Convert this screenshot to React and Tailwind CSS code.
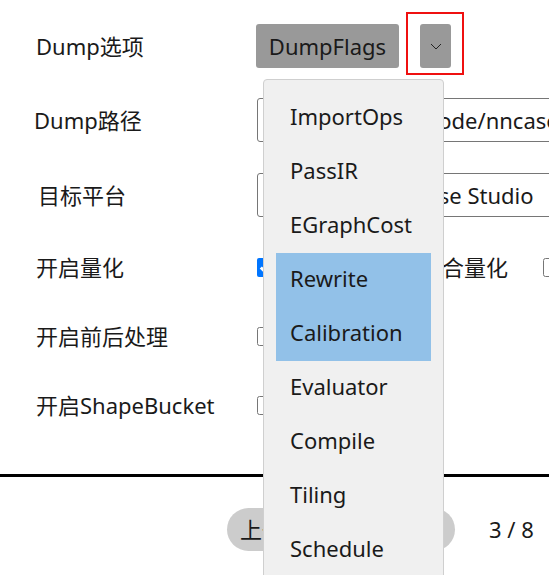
import { useState } from "react";

const dumpFlags = [
  "ImportOps",
  "PassIR",
  "EGraphCost",
  "Rewrite",
  "Calibration",
  "Evaluator",
  "Compile",
  "Tiling",
  "Schedule",
  "CodeGen",
];

const App = () => {
  const [selected] = useState(["Rewrite", "Calibration"]);

  return (
    <div
      className="relative h-[575px] w-[549px] overflow-hidden bg-white text-[22px] text-[#1a1a1a]"
      style={{ fontFamily: '"Noto Sans", "Noto Sans CJK SC", sans-serif' }}
    >
      <div className="flex flex-col">
        {/* Dump选项 */}
        <div className="mt-[24px] flex h-[44px] items-center whitespace-nowrap">
          <div className="w-[256px] shrink-0 pl-[36px]">Dump选项</div>
          <button className="h-[44px] w-[143px] shrink-0 rounded-[3px] bg-[#999999] text-[22px]">
            DumpFlags
          </button>
          <div className="relative ml-[21px] shrink-0">
            <button className="flex h-[44px] w-[31px] items-center justify-center rounded-[3px] bg-[#999999]">
              <svg width="12" height="7" viewBox="0 0 12 7" fill="none">
                <path d="M1 1l5 5 5-5" stroke="#222" strokeWidth="1" />
              </svg>
            </button>
            <div className="absolute left-[-14px] top-[-12px] h-[63px] w-[58px] border-2 border-[#ef1010]" />
          </div>
        </div>

        {/* Dump路径 */}
        <div className="mt-[30px] flex h-[44px] items-center whitespace-nowrap">
          <div className="w-[257px] shrink-0 pl-[34px]">Dump路径</div>
          <input
            className="h-[44px] w-[340px] shrink-0 rounded-[3px] border border-[#767676] px-[6px] text-[22px] outline-none"
            defaultValue="D:/workspace/vCode/nncase/tmp"
            readOnly
          />
        </div>

        {/* 目标平台 */}
        <div className="mt-[31px] flex h-[44px] items-center whitespace-nowrap">
          <div className="w-[257px] shrink-0 pl-[38px]">目标平台</div>
          <input
            className="h-[44px] w-[340px] shrink-0 rounded-[3px] border border-[#767676] px-[6px] text-[22px] outline-none"
            defaultValue="k230 within nncase Studio"
            readOnly
          />
        </div>

        {/* 开启量化 */}
        <div className="mt-[28px] flex h-[44px] items-center whitespace-nowrap">
          <div className="w-[257px] shrink-0 pl-[36px]">开启量化</div>
          <input type="checkbox" defaultChecked className="m-0 h-[19px] w-[19px] shrink-0" />
          <div className="ml-[144px] shrink-0">混合量化</div>
          <input type="checkbox" className="m-0 ml-[35px] h-[19px] w-[19px] shrink-0" />
        </div>

        {/* 开启前后处理 */}
        <div className="mt-[25px] flex h-[44px] items-center whitespace-nowrap">
          <div className="w-[257px] shrink-0 pl-[36px]">开启前后处理</div>
          <input type="checkbox" className="m-0 h-[19px] w-[19px] shrink-0" />
        </div>

        {/* 开启ShapeBucket */}
        <div className="mt-[25px] flex h-[44px] items-center whitespace-nowrap">
          <div className="w-[257px] shrink-0 pl-[36px]">开启ShapeBucket</div>
          <input type="checkbox" className="m-0 h-[19px] w-[19px] shrink-0" />
        </div>

        <div className="mt-[47px] h-[3px] w-full bg-black" />

        {/* pagination */}
        <div className="mt-[31px] flex h-[43px] items-center whitespace-nowrap">
          <div className="ml-[227px] flex shrink-0 gap-[10px]">
            <button className="h-[43px] w-[109px] rounded-full bg-[#cccccc] pl-[13px] text-left text-[22px]">
              上一页
            </button>
            <button className="h-[43px] w-[109px] rounded-full bg-[#cccccc] text-[22px]">
              下一页
            </button>
          </div>
          <div className="ml-[34px] shrink-0">3 / 8</div>
        </div>
      </div>

      {/* dropdown menu */}
      <div className="absolute left-[263px] top-[79px] w-[181px] rounded-[4px] border border-[#cfcfcf] bg-[#f0f0f0] px-[12px] pt-[11px]">
        {dumpFlags.map((flag) => (
          <div
            key={flag}
            className={`flex h-[54px] items-center pb-[3px] pl-[14px] ${
              selected.includes(flag) ? "bg-[#92c1e8]" : ""
            }`}
          >
            {flag}
          </div>
        ))}
      </div>
    </div>
  );
};

export default App;
